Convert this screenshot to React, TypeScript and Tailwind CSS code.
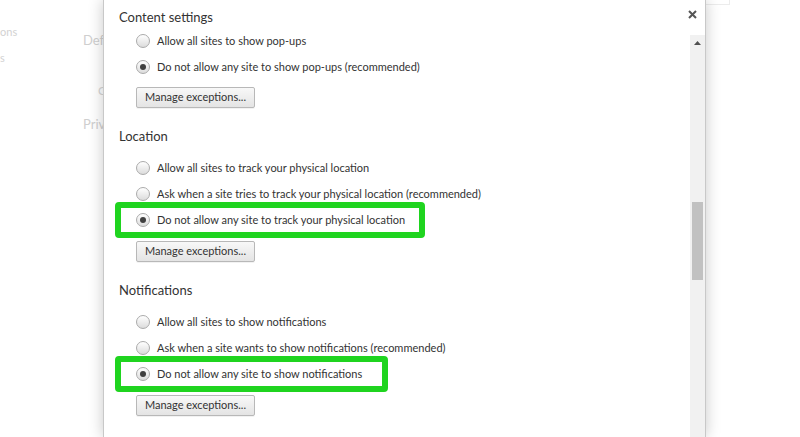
import React from 'react';

type Option = { label: string; checked?: boolean; highlight?: number };

const sections: { title?: string; options: Option[] }[] = [
  {
    options: [
      { label: 'Allow all sites to show pop-ups' },
      { label: 'Do not allow any site to show pop-ups (recommended)', checked: true },
    ],
  },
  {
    title: 'Location',
    options: [
      { label: 'Allow all sites to track your physical location' },
      { label: 'Ask when a site tries to track your physical location (recommended)' },
      { label: 'Do not allow any site to track your physical location', checked: true, highlight: 310 },
    ],
  },
  {
    title: 'Notifications',
    options: [
      { label: 'Allow all sites to show notifications' },
      { label: 'Ask when a site wants to show notifications (recommended)' },
      { label: 'Do not allow any site to show notifications', checked: true, highlight: 273 },
    ],
  },
];

function Radio({ checked }: { checked?: boolean }) {
  return (
    <span className="flex h-[14px] w-[14px] shrink-0 items-center justify-center rounded-full border border-[#ababab] bg-gradient-to-b from-[#ffffff] to-[#dcdcdc]">
      {checked && <span className="h-[6px] w-[6px] rounded-full bg-[#404040]" />}
    </span>
  );
}

function Row({ option }: { option: Option }) {
  return (
    <div className="relative flex h-[26px] items-center pl-[17px]">
      {option.highlight && (
        <div
          className="absolute top-[-5px] bottom-[-5px] left-[-4px] rounded-[4px] border-[6px] border-[#1fd41f]"
          style={{ width: option.highlight }}
        />
      )}
      <Radio checked={option.checked} />
      <span className="relative ml-[7px] whitespace-nowrap text-[11px] text-[#333]">{option.label}</span>
    </div>
  );
}

function ManageButton({ top }: { top: string }) {
  return (
    <button
      className={`${top} ml-[17px] flex h-[21px] w-[119px] items-center justify-center rounded-[2px] border border-[#b8b8b8] bg-gradient-to-b from-[#f8f8f8] to-[#e4e4e4] text-[11px] text-[#333] shadow-[0_1px_0_rgba(0,0,0,0.05)]`}
    >
      Manage exceptions...
    </button>
  );
}

export default function App() {
  return (
    <div className="relative h-[437px] w-[800px] overflow-hidden bg-white font-['Lato','Noto_Sans',sans-serif]">
      {/* faded settings page behind the dialog */}
      <div className="absolute left-0 top-[24px] text-[11px] text-[#d2d2d2]">ons</div>
      <div className="absolute left-0 top-[50px] text-[11px] text-[#d2d2d2]">s</div>
      <div className="absolute left-[83px] top-[31px] text-[13px] text-[#cfcfcf]">Default</div>
      <div className="absolute left-[98px] top-[82px] text-[12px] text-[#d6d6d6]">C</div>
      <div className="absolute left-[83px] top-[115px] text-[13px] text-[#cfcfcf]">Privacy</div>
      <div className="absolute left-[705px] top-[-2px] h-[7px] w-[25px] border border-[#ececec]" />

      {/* dialog */}
      <div className="absolute left-[103px] top-0 flex h-[437px] w-[603px] flex-col border-x border-[#c8c8c8] bg-white shadow-[0_0_14px_rgba(0,0,0,0.22)]">
        <div className="flex h-[28px] items-start justify-between pl-[15px] pr-[8px] pt-[7px]">
          <span className="text-[13px] leading-[20px] text-[#333]">Content settings</span>
          <svg width="9" height="9" viewBox="0 0 9 9" className="mt-[3px]">
            <path d="M1 1L8 8M8 1L1 8" stroke="#555" strokeWidth="2" />
          </svg>
        </div>

        <div className="flex flex-1">
          <div className="flex flex-1 flex-col pl-[15px]">
            {sections.map((section, i) => (
              <div key={i} className="flex flex-col">
                {section.title && (
                  <div className="mt-[19px] flex h-[20px] items-center text-[13px] text-[#333]">
                    {section.title}
                  </div>
                )}
                <div className={section.title ? 'mt-[8px] flex flex-col' : 'flex flex-col'}>
                  {section.options.map((option) => (
                    <Row key={option.label} option={option} />
                  ))}
                </div>
                <ManageButton top={section.title ? 'mt-[8px]' : 'mt-[7px]'} />
              </div>
            ))}
          </div>

          {/* scrollbar */}
          <div className="mt-[7px] flex w-[15px] flex-col items-center bg-[#f1f1f1]">
            <svg width="7" height="4" viewBox="0 0 7 4" className="mt-[6px]">
              <path d="M0 4L3.5 0L7 4Z" fill="#505050" />
            </svg>
            <div className="mt-[157px] h-[78px] w-[11px] bg-[#c1c1c1]" />
          </div>
        </div>
      </div>
    </div>
  );
}
